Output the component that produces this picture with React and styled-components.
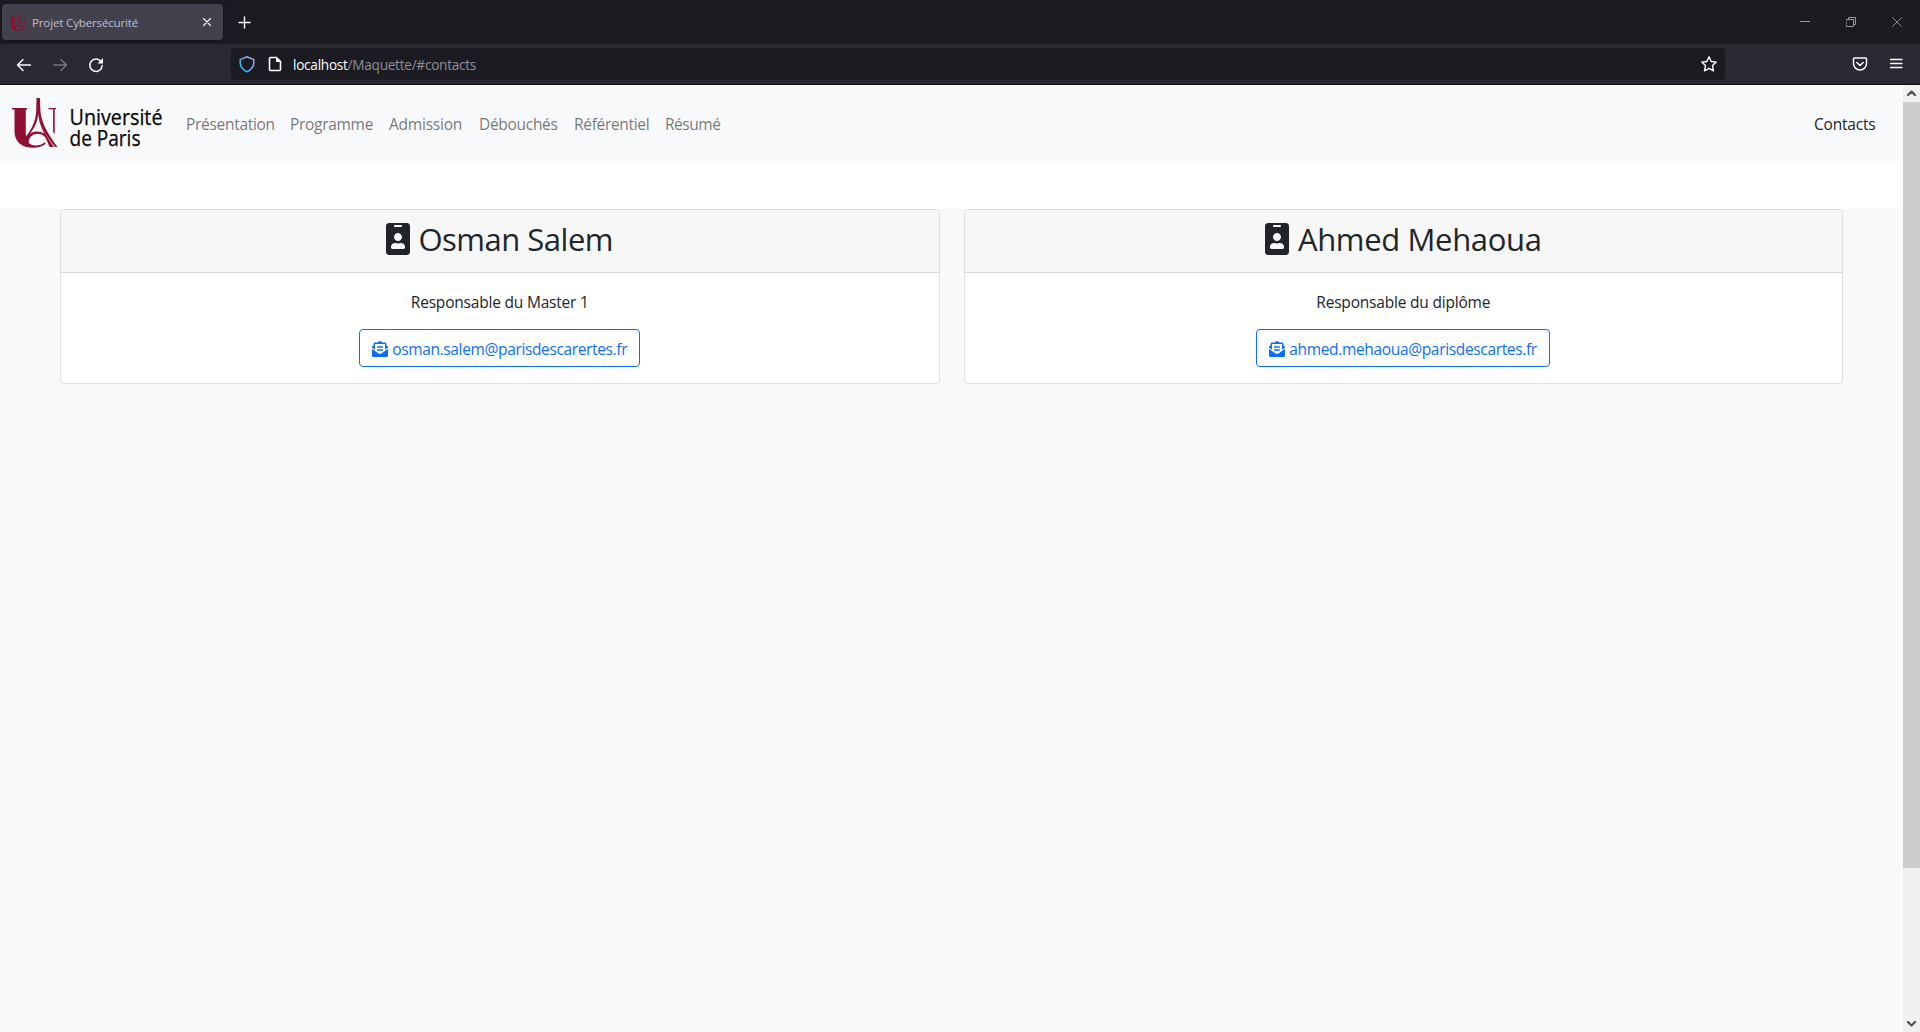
import React from "react";
import styled, { createGlobalStyle } from "styled-components";
import { FaIdBadge, FaEnvelopeOpenText } from "react-icons/fa";

const GlobalStyle = createGlobalStyle`
  *, *::before, *::after { box-sizing: border-box; }
  body {
    margin: 0;
    overflow: hidden;
    background: #fff;
    color: #212529;
    font-family: "Open Sans", "Noto Sans", sans-serif;
    font-size: 15.5px;
    line-height: 24px;
  }
  svg { display: block; flex: none; }
`;

const Window = styled.div`
  display: flex;
  flex-direction: column;
  height: 1032px;
`;

const TabBar = styled.header`
  display: flex;
  align-items: center;
  height: 44px;
  padding: 0 18px 0 2px;
  background: #1c1b22;
`;

const Tab = styled.div`
  display: flex;
  align-items: center;
  width: 221px;
  height: 36px;
  padding: 0 10px 0 8px;
  border-radius: 4px;
  background: #42414d;
  box-shadow: 0 0 3px rgba(0, 0, 0, 0.5);
`;

const TabTitle = styled.span`
  flex: 1;
  margin-left: 6px;
  padding-top: 1px;
  color: #bfbfc9;
  font-size: 11.6px;
  letter-spacing: -0.18px;
  white-space: nowrap;
`;

const NewTab = styled.div`
  margin-left: 15px;
`;

const WindowButtons = styled.div`
  display: flex;
  gap: 36px;
  margin-left: auto;
`;

const ToolBar = styled.div`
  display: flex;
  align-items: center;
  height: 41px;
  padding: 0 16px;
  border-bottom: 1px solid #0c0c0d;
  background: #2b2a33;
`;

const NavButtons = styled.div`
  display: flex;
  gap: 20px;
  width: 215px;
  padding-top: 1px;
`;

const AddressBar = styled.div`
  display: flex;
  align-items: center;
  width: 1494px;
  height: 32px;
  padding: 0 7px;
  border-radius: 4px;
  background: #1c1b22;
`;

const PageGlyph = styled.div`
  margin: 0 11px 0 12px;
`;

const Url = styled.span`
  flex: 1;
  padding-top: 2px;
  color: #8f8f98;
  font-size: 13.6px;
  letter-spacing: -0.26px;
`;

const Host = styled.span`
  color: #fbfbfe;
`;

const ToolButtons = styled.div`
  display: flex;
  align-items: center;
  gap: 20px;
  margin-left: auto;
`;

const Viewport = styled.div`
  display: flex;
  flex: 1;
`;

const Page = styled.main`
  display: flex;
  flex: 1;
  flex-direction: column;
`;

const NavBar = styled.nav`
  display: flex;
  align-items: center;
  height: 76px;
  padding: 0 19px 0 8px;
  background: #f8f9fa;
`;

const NavLinks = styled.div`
  display: flex;
  margin-left: 10px;
`;

const NavLink = styled.a`
  width: ${(p) => p.$width}px;
  padding: 8px;
  margin-top: 2px;
  color: ${(p) => (p.$active ? "rgba(0,0,0,.9)" : "rgba(0,0,0,.55)")};
  letter-spacing: ${(p) => p.$track || 0}px;
  white-space: nowrap;
  ${(p) => p.$active && "margin-left: auto;"}
`;

const LogoArt = styled.svg`
  overflow: visible;
`;

const Contacts = styled.section`
  display: grid;
  grid-template-columns: 1fr 1fr;
  gap: 24px;
  flex: 1;
  align-items: start;
  margin-top: 48px;
  padding: 0 60px;
  background: #f8f9fa;
`;

const Card = styled.article`
  overflow: hidden;
  border: 1px solid #dfdfdf;
  border-radius: 4px;
  background: #fff;
  text-align: center;
`;

const CardHeader = styled.div`
  display: flex;
  justify-content: center;
  height: 63px;
  padding-top: 8px;
  border-bottom: 1px solid #d8d8d8;
  background: #f7f7f7;
`;

const Name = styled.h2`
  display: flex;
  gap: ${(p) => p.$gap}px;
  margin: 0;
  font-size: 31px;
  font-weight: 400;
  line-height: 42px;
  letter-spacing: ${(p) => p.$track}px;
  white-space: nowrap;
  svg { width: 24px; height: 32px; margin-top: 5px; }
`;

const CardBody = styled.div`
  display: flex;
  flex-direction: column;
  align-items: center;
  gap: 15px;
  padding: 17px 16px 16px;
`;

const Role = styled.p`
  margin: 0;
  letter-spacing: ${(p) => p.$track}px;
`;

const MailButton = styled.a`
  display: flex;
  gap: 4px;
  width: ${(p) => p.$width}px;
  height: 38px;
  padding: 7px 12px;
  border: 1px solid #0d6efd;
  border-radius: 4px;
  color: #0d6efd;
  letter-spacing: ${(p) => p.$track}px;
  white-space: nowrap;
  svg { margin-top: 4px; }
`;

const ScrollBar = styled.div`
  display: flex;
  flex-direction: column;
  width: 17px;
  background: #f0f0f0;
`;

const ScrollArrow = styled.div`
  display: grid;
  place-items: center;
  height: 17px;
  padding-bottom: 2px;
  transform: ${(p) => (p.$down ? "rotate(180deg)" : "none")};
`;

const Track = styled.div`
  flex: 1;
`;

const Thumb = styled.div`
  height: 766px;
  background: #cdcdcd;
`;

const LINKS = [
  { label: "Présentation", width: 104, track: -0.3 },
  { label: "Programme", width: 99, track: -0.3 },
  { label: "Admission", width: 90, track: -0.22 },
  { label: "Débouchés", width: 95, track: -0.3 },
  { label: "Référentiel", width: 91, track: -0.32 },
  { label: "Résumé", width: 72, track: -0.45 },
];

const PEOPLE = [
  {
    name: "Osman Salem", track: -0.5, gap: 8,
    role: "Responsable du Master 1", roleTrack: -0.2,
    mail: "osman.salem@parisdescarertes.fr", mailTrack: -0.36, width: 281,
  },
  {
    name: "Ahmed Mehaoua", track: -0.35, gap: 9,
    role: "Responsable du diplôme", roleTrack: -0.2,
    mail: "ahmed.mehaoua@parisdescartes.fr", mailTrack: -0.34, width: 294,
  },
];

const Emblem = ({ size, ...rest }) => (
  <svg width={size} height={size * 1.11} viewBox="0 0 46 51" fill="#910e33" {...rest}>
    <path d="M0 11h15v1.400h-1.200V36c0 9 4 12.500 10 12.500 3.500 0 6.200-1 8.800-3.200l1.200 1.500c-3.500 2.800-7.500 3.900-12.300 3.900C9.500 50.700 2.500 45 2.500 34V12.400H0z" />
    <path d="M36.500 11h7.500v1.300h-1.300V37l-1.600-2V12.300h-4.600z" />
    <path d="M24.500 1h3.400l.5 13c.8 12 8.600 24.500 17.100 36H43C34 38.500 27.500 28 26.300 17 25.300 27 21 33.500 14 41.500l-1-.8c6.500-8 10.700-16 11.200-26.700z" />
    <path d="M26.600 17c1.500 12 8 22.500 15.300 33h-4.100c-1.500-2.500-2.500-6-4.300-9.300-3.500-5.200-11-5.200-14.800-1-2 2.300-2.700 5-1.700 7.300-2.200-1.500-3.300-4-3-6.500 4-6 12.500-7.800 18.200-3.900C28.500 30 26.500 23 26.600 17z" />
  </svg>
);

const Logo = () => (
  <LogoArt width="160" height="60" viewBox="8 93 160 60" role="img">
    <Emblem size={46} x="12" y="97" />
    <g fill="#050505" stroke="#050505" strokeWidth="0.25" fontFamily="Open Sans, sans-serif" fontSize="22.500" fontWeight="500">
      <text x="69.500" y="125" textLength="93" lengthAdjust="spacingAndGlyphs">Université</text>
      <text x="69.500" y="146" textLength="71" lengthAdjust="spacingAndGlyphs">de Paris</text>
    </g>
  </LogoArt>
);

const Stroke = ({ w = 16, h = w, color = "#fbfbfe", sw = 1.4, d }) => (
  <svg width={w} height={h} viewBox={`0 0 ${w} ${h}`} fill="none" stroke={color} strokeWidth={sw} strokeLinecap="round" strokeLinejoin="round">
    <path d={d} />
  </svg>
);

const Shield = () => (
  <svg width="18" height="18" viewBox="0 0 18 18" fill="none" strokeWidth="1.500" strokeLinejoin="round">
    <defs>
      <linearGradient id="shield" x1="0" y1="1" x2="1" y2="0">
        <stop offset="0.2" stopColor="#1cc4f5" />
        <stop offset="0.9" stopColor="#b8a0f5" />
      </linearGradient>
    </defs>
    <path stroke="url(#shield)" d="M9 1.800 2.200 4.600v3.200c0 3.800 2.600 7 6.800 8.900 4.200-1.900 6.800-5.100 6.800-8.900V4.600z" />
  </svg>
);

export default function App() {
  return (
    <>
      <GlobalStyle />
      <Window>
        <TabBar>
          <Tab>
            <Emblem size={16} />
            <TabTitle>Projet Cybersécurité</TabTitle>
            <Stroke w={12} sw={1.1} d="M2.500 2.500l7 7M9.500 2.500l-7 7" />
          </Tab>
          <NewTab><Stroke w={13} d="M6.500 1v11M1 6.500h11" /></NewTab>
          <WindowButtons>
            <Stroke w={10} color="#99989c" sw={1} d="M.5 4.500h9" />
            <Stroke w={10} color="#99989c" sw={1} d="M.5 2.500h7v7h-7zM2.500 2.500v-2h7v7h-2" />
            <Stroke w={10} color="#99989c" sw={0.9} d="M.5.5l9 9M9.500.5l-9 9" />
          </WindowButtons>
        </TabBar>
        <ToolBar>
          <NavButtons>
            <Stroke d="M14.500 8H1.800M7 2.500 1.500 8 7 13.500" />
            <Stroke color="#77767e" d="M1.500 8h12.700M9 2.500l5.500 5.500L9 13.500" />
            <svg width="16" height="16" viewBox="0 0 16 16" fill="none" stroke="#fbfbfe" strokeWidth="1.500">
              <path d="M13 4.500A6.200 6.200 0 1 0 14.200 8.500" strokeLinecap="round" />
              <path d="M15 1v5.500H9.500z" fill="#fbfbfe" stroke="none" />
            </svg>
          </NavButtons>
          <AddressBar>
            <Shield />
            <PageGlyph>
              <svg width="14" height="16" viewBox="0 0 14 16" fill="none" stroke="#fbfbfe" strokeWidth="1.600" strokeLinejoin="round">
                <path d="M8.500 1.500H2.500a1 1 0 0 0-1 1v11a1 1 0 0 0 1 1h9a1 1 0 0 0 1-1V5.500z" />
                <path d="M8 1.500v4.500h4.500z" fill="#fbfbfe" stroke="none" />
              </svg>
            </PageGlyph>
            <Url><Host>localhost</Host>/Maquette/#contacts</Url>
            <Stroke w={18} sw={1.400} d="M9 1.800l2.200 4.700 5.100.6-3.800 3.500 1 5.200L9 13.300l-4.500 2.500 1-5.200L1.700 7.100l5.100-.6z" />
          </AddressBar>
          <ToolButtons>
            <Stroke w={16} sw={1.500} d="M2.500 2h11q1 0 1 1v4.500a6.500 6.500 0 0 1-13 0V3q0-1 1-1zM4.800 6.500 8 9.500l3.200-3" />
            <Stroke w={16} sw={1.300} d="M2.500 3.500h11.500M2.500 7.500h11.500M2.500 11.500h11.500" />
          </ToolButtons>
        </ToolBar>
        <Viewport>
          <Page>
            <NavBar>
              <Logo />
              <NavLinks>
                {LINKS.map((l) => (
                  <NavLink key={l.label} $width={l.width} $track={l.track}>{l.label}</NavLink>
                ))}
              </NavLinks>
              <NavLink $active $width={78} $track={-0.2}>Contacts</NavLink>
            </NavBar>
            <Contacts>
              {PEOPLE.map((p) => (
                <Card key={p.mail}>
                  <CardHeader>
                    <Name $track={p.track} $gap={p.gap}>
                      <FaIdBadge />
                      {p.name}
                    </Name>
                  </CardHeader>
                  <CardBody>
                    <Role $track={p.roleTrack}>{p.role}</Role>
                    <MailButton $width={p.width} $track={p.mailTrack}>
                      <FaEnvelopeOpenText size={16} />
                      {p.mail}
                    </MailButton>
                  </CardBody>
                </Card>
              ))}
            </Contacts>
          </Page>
          <ScrollBar>
            <ScrollArrow><Stroke w={11} h={8} color="#505050" sw={2.2} d="M2 6l3.500-3.500L9 6" /></ScrollArrow>
            <Track><Thumb /></Track>
            <ScrollArrow $down><Stroke w={11} h={8} color="#505050" sw={2.2} d="M2 6l3.500-3.500L9 6" /></ScrollArrow>
          </ScrollBar>
        </Viewport>
      </Window>
    </>
  );
}
